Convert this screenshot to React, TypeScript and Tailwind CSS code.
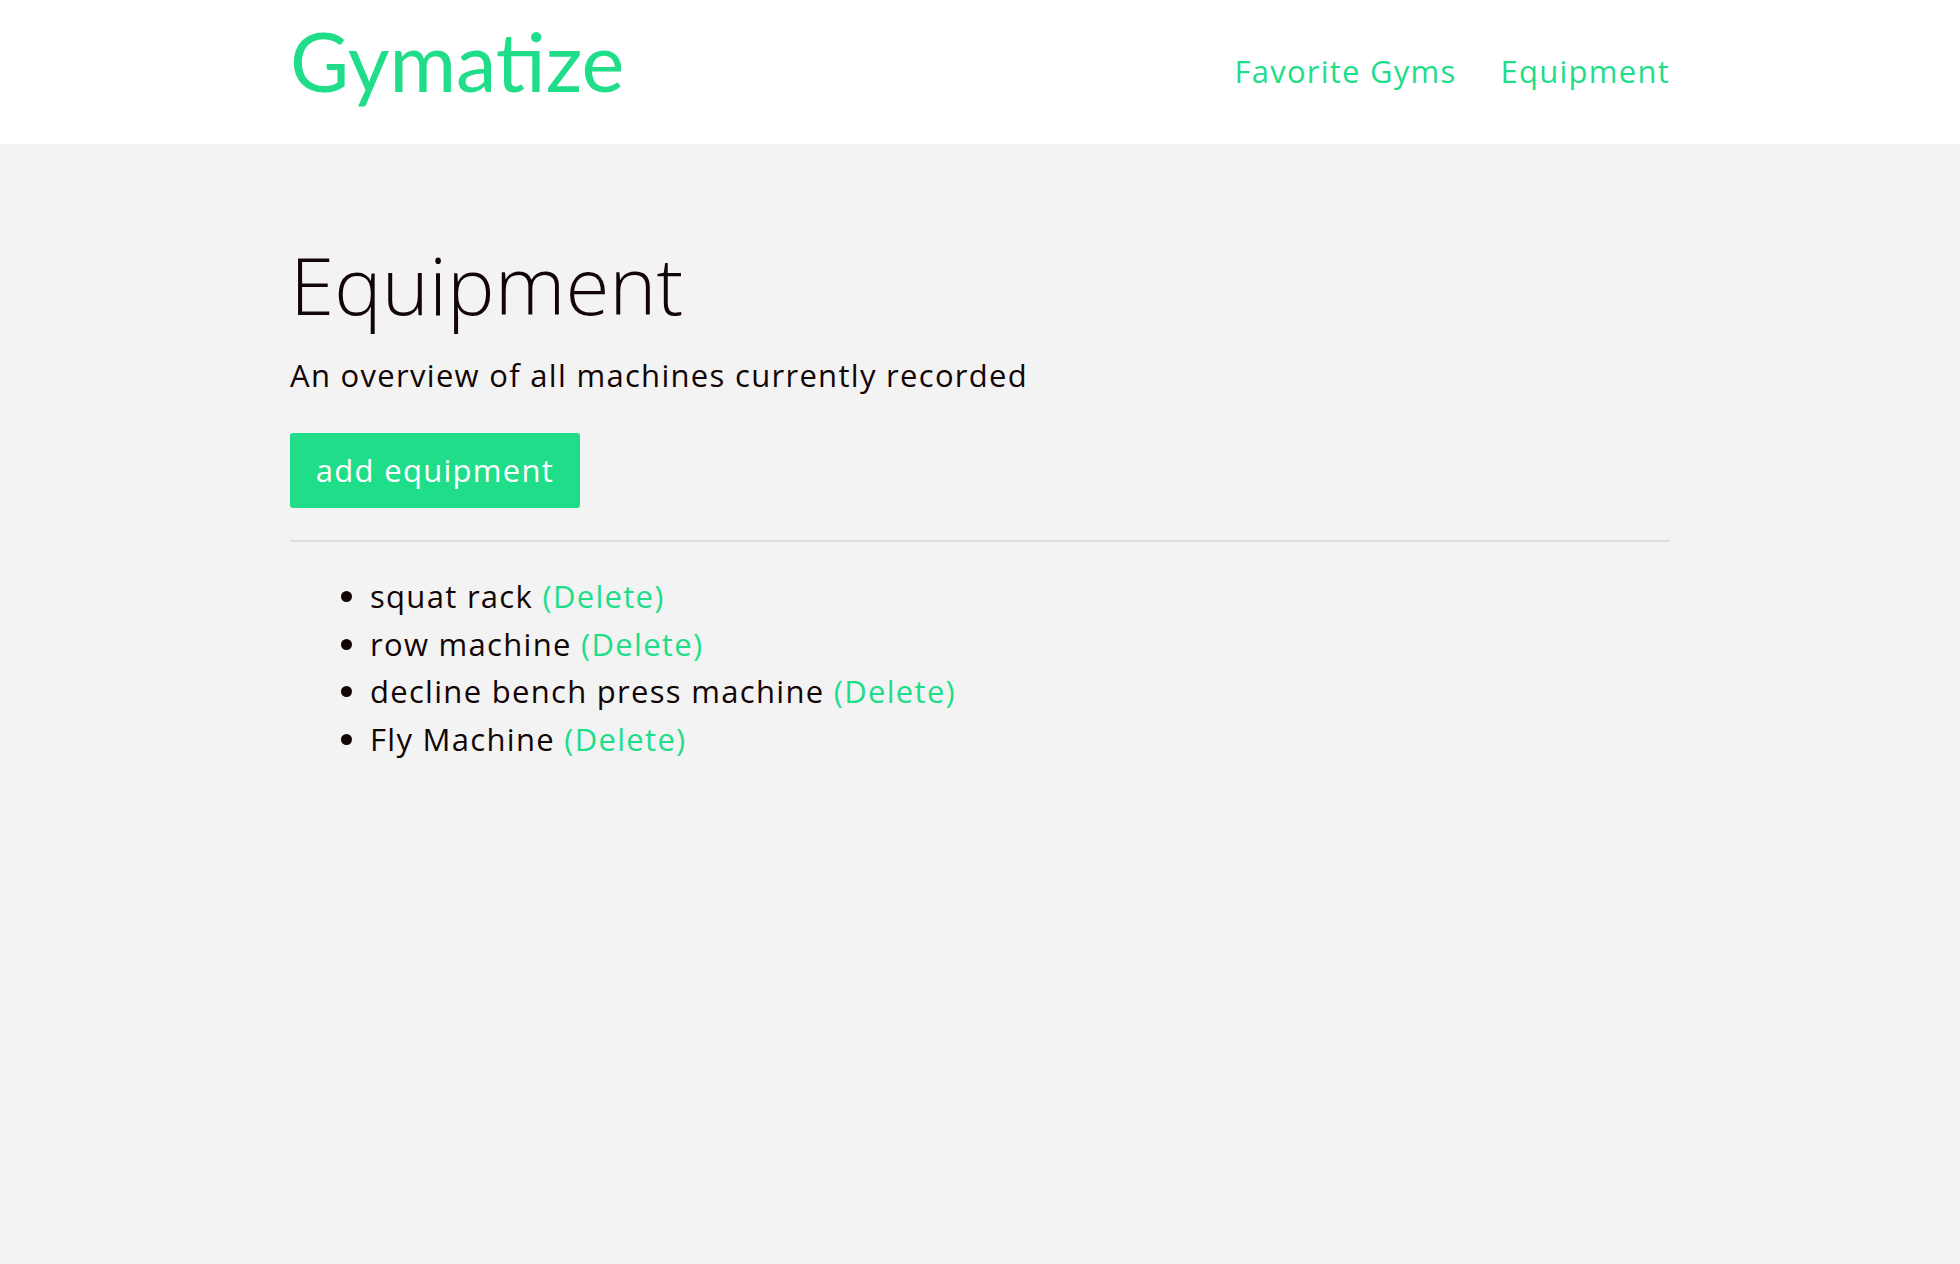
import React from "react";

const items = ["squat rack", "row machine", "decline bench press machine", "Fly Machine"];

export default function App() {
  return (
    <div className="min-h-[1264px] bg-[#f3f3f3] text-[#120505]" style={{ fontFamily: '"Open Sans", sans-serif' }}>
      <header className="h-[144px] bg-white">
        <div className="mx-auto flex h-full w-[1380px] items-center justify-between">
          <a className="text-[81px] leading-none text-[#1fdd89] -mt-[24px]" style={{ fontFamily: 'Lato, sans-serif' }}>Gymatize</a>
          <nav className="flex gap-[44px] text-[31px] tracking-[1.25px] text-[#1fdd89] -mt-[1px]">
            <a>Favorite Gyms</a>
            <a>Equipment</a>
          </nav>
        </div>
      </header>
      <main className="mx-auto w-[1380px] pt-[90px]">
        <h1 className="text-[80px] font-light leading-[100px]">Equipment</h1>
        <p className="mt-[17px] text-[31px] leading-[48px] tracking-[1.3px]">An overview of all machines currently recorded</p>
        <button className="mt-[34px] h-[75px] w-[290px] rounded-[3px] bg-[#1fdd89] text-[31px] tracking-[1.3px] text-white">add equipment</button>
        <hr className="mt-[32px] border-t-2 border-[#dddddd]" />
        <ul className="mt-[31px] list-disc pl-[80px] text-[31px] leading-[47.5px] tracking-[1.3px]">
          {items.map((it) => (
            <li key={it}>
              {it} <a className="text-[#1fdd89]">(Delete)</a>
            </li>
          ))}
        </ul>
      </main>
    </div>
  );
}
